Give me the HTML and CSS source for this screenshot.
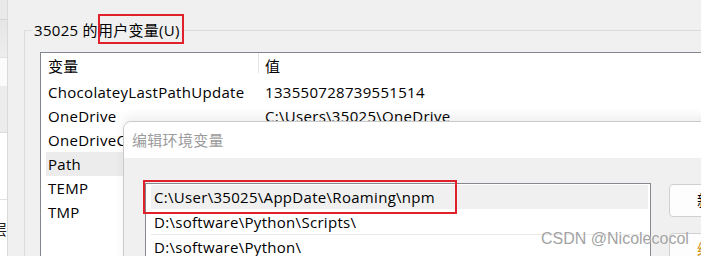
FILE: index.html
```html
<!DOCTYPE html>
<html lang="zh-CN">
<head>
<meta charset="utf-8">
<link rel="stylesheet" href="styles.css">
</head>
<body>
<div class="app">
  <div class="side">
    <div class="seg s1"></div>
    <div class="seg s2"></div>
    <div class="seg s3"></div>
    <div class="seg s4"></div>
    <div class="seg s5"><span class="clip dot">。</span></div>
    <div class="seg s6"><span class="clip ceng">层</span></div>
  </div>
  <div class="main">
    <div class="group">
      <div class="legend">35025 的用户变量(U)</div>
      <div class="listview">
        <div class="lv-head">
          <div class="c1">变量</div>
          <div class="c2">值</div>
        </div>
        <div class="lv-row"><div class="c1">ChocolateyLastPathUpdate</div><div class="c2">133550728739551514</div></div>
        <div class="lv-row"><div class="c1">OneDrive</div><div class="c2">C:\Users\35025\OneDrive</div></div>
        <div class="lv-row"><div class="c1">OneDriveConsumer</div><div class="c2">C:\Users\35025\OneDrive</div></div>
        <div class="lv-row sel"><div class="c1">Path</div><div class="c2"></div></div>
        <div class="lv-row"><div class="c1">TEMP</div><div class="c2"></div></div>
        <div class="lv-row"><div class="c1">TMP</div><div class="c2"></div></div>
      </div>
    </div>
  </div>
</div>

<div class="dialog">
  <div class="dlg-title">编辑环境变量</div>
  <div class="dlg-body">
    <div class="pathlist">
      <div class="p-row sel">C:\User\35025\AppDate\Roaming\npm</div>
      <div class="p-row">D:\software\Python\Scripts\</div>
      <div class="p-row">D:\software\Python\</div>
    </div>
    <div class="btns">
      <div class="btn"><span class="btn-t">新</span></div>
      <div class="btn"><span class="btn-t orange">编</span></div>
    </div>
  </div>
</div>

<div class="redbox rb1"></div>
<div class="redbox rb2"></div>
<div class="watermark">CSDN @Nicolecocol</div>
</body>
</html>
```

FILE: styles.css
```css
html, body {
  margin: 0;
  padding: 0;
}
body {
  width: 701px;
  height: 256px;
  overflow: hidden;
  position: relative;
  background: #f0f0f0;
  font-family: "Open Sans", "Noto Sans CJK SC", sans-serif;
  font-size: 15px;
  letter-spacing: 0.3px;
  color: #000;
}
.app {
  display: flex;
  height: 256px;
}
.side {
  width: 7px;
  border-right: 1px solid #d9d9d9;
  display: flex;
  flex-direction: column;
  background: #fff;
}
.seg { overflow: hidden; position: relative; }
.s1 { height: 19px; background: #e9e9e9; border-bottom: 1px solid #d6d6d6; }
.s2 { height: 37px; background: linear-gradient(#e6e6e6, #ededed); border-bottom: 1px solid #e0e0e0; }
.s3 { height: 28px; background: #fbfbfb; }
.s4 { height: 46px; background: #ececec; border-bottom: 1px solid #dcdcdc; }
.s5 { height: 66px; background: #fff; border-bottom: 1px solid #e2e2e2; }
.s6 { flex: 1; background: #fff; }
.clip {
  display: block;
  white-space: nowrap;
  font-size: 15px;
  color: #222;
}
.dot { margin: 26px 0 0 -10px; color: #333; }
.ceng { margin: 18px 0 0 -8px; }

.main {
  flex: 1;
  padding: 30px 0 0 16px;
  min-width: 0;
}
.group {
  position: relative;
  border: 1px solid #dcdcdc;
  border-right: none;
  height: 260px;
}
.legend {
  position: absolute;
  top: -11px;
  left: 7px;
  padding: 0 2px;
  background: #f0f0f0;
  line-height: 20px;
  white-space: nowrap;
}
.listview {
  margin: 21px 0 0 15px;
  background: #fff;
  border: 1px solid #82878f;
  border-right: none;
  height: 240px;
}
.lv-head, .lv-row {
  display: flex;
  white-space: nowrap;
}
.lv-head {
  height: 27px;
  line-height: 27px;
  padding-left: 7px;
}
.lv-head .c1 {
  width: 210px;
  border-right: 1px solid #e5e5e5;
  height: 20px;
  line-height: 27px;
}
.lv-head .c2 { padding-left: 6px; }
.lv-row {
  height: 24px;
  line-height: 24px;
  margin-left: 5px;
  padding-left: 2px;
}
.lv-row .c1 { width: 217px; }
.lv-row.sel { background: #ececec; }

.dialog {
  position: absolute;
  left: 123px;
  top: 121px;
  width: 700px;
  height: 160px;
  border: 1px solid #c9c9c9;
  border-radius: 8px 0 0 0;
  background: #f0f0f0;
  box-shadow: 0 -6px 10px rgba(0,0,0,0.06);
  overflow: hidden;
}
.dlg-title {
  height: 36px;
  line-height: 36px;
  background: #fff;
  padding-left: 8px;
  color: #9b9b9b;
}
.dlg-body {
  display: flex;
  padding: 25px 0 0 21px;
  gap: 18px;
}
.pathlist {
  flex: none;
  width: 497px;
  height: 90px;
  background: #fff;
  border: 1px solid #86898f;
  padding: 1px 2px 0 5px;
}
.p-row {
  height: 24px;
  line-height: 24px;
  padding-left: 3px;
  border-bottom: 1px solid #e9e9e9;
  white-space: nowrap;
}
.p-row.sel {
  background: #f0f0f0;
  border-bottom-color: #fff;
}
.btns {
  flex: none;
  display: flex;
  flex-direction: column;
  gap: 16px;
  padding-top: 1px;
}
.btn {
  width: 60px;
  height: 31px;
  border: 1px solid #d0d0d0;
  border-radius: 4px;
  background: #fdfdfd;
  line-height: 31px;
  padding-left: 27px;
  white-space: nowrap;
}
.orange { color: #c88a00; }

.redbox {
  position: absolute;
  border: 2px solid #e0202a;
  box-sizing: border-box;
}
.rb1 { left: 98px; top: 14px; width: 86px; height: 30px; }
.rb2 { left: 143px; top: 180px; width: 314px; height: 34px; }

.watermark {
  position: absolute;
  left: 541px;
  top: 229px;
  font-family: "Liberation Sans", sans-serif;
  font-size: 16px;
  letter-spacing: 0;
  line-height: 20px;
  color: #a3a3a3;
  text-shadow: 0 0 1px #fff;
  white-space: nowrap;
}
```
